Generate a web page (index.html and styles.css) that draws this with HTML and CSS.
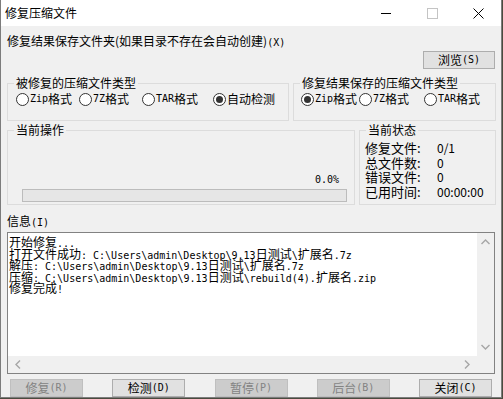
FILE: index.html
```html
<!DOCTYPE html>
<html>
<head>
<meta charset="UTF-8">
<title>修复压缩文件</title>
<link rel="stylesheet" href="styles.css">
</head>
<body>

<div class="window">
  <div class="titlebar">
    <span class="title">修复压缩文件</span>
    <div class="controls">
      <span class="ctl"><svg width="10" height="10" viewBox="0 0 10 10"><path d="M0 5.5h10" stroke="#000" stroke-width="1"/></svg></span>
      <span class="ctl"><svg width="11" height="11" viewBox="0 0 11 11"><rect x="0.5" y="0.5" width="10" height="10" fill="none" stroke="#c4c4c4"/></svg></span>
      <span class="ctl"><svg width="11" height="11" viewBox="0 0 11 11"><path d="M0.5 0.5l10 10M10.5 0.5l-10 10" stroke="#000" stroke-width="1"/></svg></span>
    </div>
  </div>

  <div class="client">
    <div class="folder-label">修复结果保存文件夹(如果目录不存在会自动创建)<span class="a">(X)</span></div>
    <div class="browse-row"><button class="btn browse">浏览<span class="a">(S)</span></button></div>

    <div class="row types">
      <fieldset class="group src">
        <legend>被修复的压缩文件类型</legend>
        <div class="radios">
          <label class="radio"><input type="radio" name="src"><span class="a">Zip</span>格式</label>
          <label class="radio"><input type="radio" name="src"><span class="a">7Z</span>格式</label>
          <label class="radio"><input type="radio" name="src"><span class="a">TAR</span>格式</label>
          <label class="radio"><input type="radio" name="src" checked>自动检测</label>
        </div>
      </fieldset>
      <fieldset class="group dst">
        <legend>修复结果保存的压缩文件类型</legend>
        <div class="radios">
          <label class="radio"><input type="radio" name="dst" checked><span class="a">Zip</span>格式</label>
          <label class="radio"><input type="radio" name="dst"><span class="a">7Z</span>格式</label>
          <label class="radio"><input type="radio" name="dst"><span class="a">TAR</span>格式</label>
        </div>
      </fieldset>
    </div>

    <div class="row work">
      <fieldset class="group op">
        <legend>当前操作</legend>
        <div class="percent"><span class="a">0.0%</span></div>
        <div class="bar"></div>
      </fieldset>
      <fieldset class="group status">
        <legend>当前状态</legend>
        <div class="stats">
          <span class="key">修复文件:</span><span class="val">0/1</span>
          <span class="key">总文件数:</span><span class="val">0</span>
          <span class="key">错误文件:</span><span class="val">0</span>
          <span class="key">已用时间:</span><span class="val">00:00:00</span>
        </div>
      </fieldset>
    </div>

    <div class="info-label">信息<span class="a">(I)</span></div>
    <div class="log">
      <div class="log-text">
        <div class="line">开始修复<span class="a">...</span></div>
        <div class="line">打开文件成功<span class="a">: C:\Users\admin\Desktop\9.13</span>日测试<span class="a">\</span>扩展名<span class="a">.7z</span></div>
        <div class="line">解压<span class="a">: C:\Users\admin\Desktop\9.13</span>日测试<span class="a">\</span>扩展名<span class="a">.7z</span></div>
        <div class="line">压缩<span class="a">: C:\Users\admin\Desktop\9.13</span>日测试<span class="a">\rebuild(4).</span>扩展名<span class="a">.zip</span></div>
        <div class="line">修复完成<span class="a">!</span></div>
      </div>
      <div class="vscroll">
        <svg width="9" height="6" viewBox="0 0 9 6"><path d="M0.5 5L4.5 1L8.5 5" fill="none" stroke="#a6a6a6" stroke-width="1.4"/></svg>
        <svg width="9" height="6" viewBox="0 0 9 6"><path d="M0.5 1L4.5 5L8.5 1" fill="none" stroke="#a6a6a6" stroke-width="1.4"/></svg>
      </div>
      <div class="hscroll">
        <svg width="6" height="9" viewBox="0 0 6 9"><path d="M5 0.5L1 4.5L5 8.5" fill="none" stroke="#a6a6a6" stroke-width="1.4"/></svg>
        <svg width="6" height="9" viewBox="0 0 6 9"><path d="M1 0.5L5 4.5L1 8.5" fill="none" stroke="#a6a6a6" stroke-width="1.4"/></svg>
      </div>
      <div class="corner"></div>
    </div>

    <div class="actions">
      <button class="btn" disabled>修复<span class="a">(R)</span></button>
      <button class="btn">检测<span class="a">(D)</span></button>
      <button class="btn" disabled>暂停<span class="a">(P)</span></button>
      <button class="btn" disabled>后台<span class="a">(B)</span></button>
      <button class="btn">关闭<span class="a">(C)</span></button>
    </div>
  </div>
</div>

</body>
</html>
```

FILE: styles.css
```css
body {
  margin: 0;
  padding: 0;
  background-color: #4a4b3e; /* desktop behind the window */
  font-family: "Noto Sans CJK SC", "Noto Sans", sans-serif;
  font-size: 12px;
  color: #000;
}
/* half-width ascii runs, 6px per char like the old bitmap font */
.a {
  font-family: "DejaVu Sans Mono", "Liberation Mono", monospace;
  font-size: 10px;
}
.window {
  box-sizing: border-box;
  width: 502px;
  height: 398px;
  border: 1px solid #7c7c7c;
  border-top: none;
  background-color: #f0f0f0;
  display: flex;
  flex-direction: column;
}
.titlebar {
  height: 26px;
  background-color: #fff;
  display: flex;
  align-items: center;
  justify-content: space-between;
}
.title {
  padding-left: 4px;
  line-height: 26px;
}
.controls {
  display: flex;
  height: 26px;
}
.ctl {
  width: 46px;
  display: flex;
  align-items: center;
  justify-content: center;
}
.client {
  padding: 8px 5px 0 6px;
  display: flex;
  flex-direction: column;
}
.folder-label {
  line-height: 14px;
}
.browse-row {
  margin-top: 1px;
  display: flex;
  justify-content: flex-end;
  padding-right: 1px;
}
.btn {
  box-sizing: border-box;
  width: 73px;
  height: 18px;
  padding: 0;
  margin: 0;
  border: 1px solid #adadad;
  background-color: #e1e1e1;
  font-family: inherit;
  font-size: 12px;
  line-height: 14px;
  color: #000;
  display: flex;
  align-items: center;
  justify-content: center;
}
.btn:disabled {
  background-color: #cccccc;
  border-color: #bfbfbf;
  color: #838383;
}
.btn.browse {
  width: 72px;
}
/* group boxes */
.row {
  display: flex;
  gap: 4px;
}
.types {
  margin-top: 7px;
}
.work {
  margin-top: 2px;
}
.group {
  margin: 0;
  padding: 0;
  min-inline-size: 0;
  border: 1px solid #dcdcdc;
}
.group > legend {
  margin-left: 6px;
  padding: 0 2px;
  line-height: 14px;
}
.src {
  width: 282px;
  box-sizing: border-box;
  padding: 2px 0 14px 0;
}
.dst {
  flex: 1;
  padding: 2px 0 14px 0;
}
.radios {
  display: grid;
  height: 14px;
  align-items: center;
}
.src .radios {
  margin-left: 8px;
  grid-template-columns: 63px 63px 71px auto;
}
.dst .radios {
  margin-left: 7px;
  grid-template-columns: 58px 65px auto;
}
.radio {
  display: flex;
  align-items: center;
  white-space: nowrap;
  line-height: 14px;
}
.radio input {
  -webkit-appearance: none;
  appearance: none;
  box-sizing: border-box;
  width: 13px;
  height: 13px;
  margin: 0 1px 0 0;
  border: 1px solid #333;
  border-radius: 50%;
  background-color: #fff;
  display: grid;
  place-content: center;
}
.radio input:checked::before {
  content: "";
  width: 7px;
  height: 7px;
  border-radius: 50%;
  background-color: #333;
}
.op {
  width: 348px;
  box-sizing: border-box;
  padding: 34px 0 2px 0;
}
.percent {
  text-align: right;
  line-height: 14px;
  margin-right: 15px;
}
.bar {
  margin: 2px 7px 0 14px;
  height: 13px;
  border: 1px solid #bcbcbc;
  background-color: #e6e6e6;
  box-sizing: border-box;
}
.status {
  flex: 1;
  padding: 4px 0 0 0;
}
.stats {
  margin-left: 5px;
  display: grid;
  grid-template-columns: 72px auto;
  font-size: 13px;
  line-height: 14.7px;
}
.val {
  font-size: 12px;
}
.info-label {
  margin-top: 9px;
  line-height: 14px;
}
/* message box with its scroll bars */
.log {
  margin-top: 2px;
  margin-right: 1px;
  height: 142px;
  box-sizing: border-box;
  border: 1px solid #828282;
  background-color: #fff;
  display: grid;
  grid-template-columns: 1fr 17px;
  grid-template-rows: 1fr 17px;
  min-width: 0;
}
.log-text {
  padding: 3px 0 0 1px;
  white-space: nowrap;
  overflow: hidden;
}
.log-text .line {
  height: 11.5px;
  line-height: 11.5px;
}
.vscroll {
  background-color: #f0f0f0;
  display: flex;
  flex-direction: column;
  justify-content: space-between;
  align-items: center;
  padding: 6px 0 6px;
}
.hscroll {
  background-color: #f0f0f0;
  display: flex;
  justify-content: space-between;
  align-items: center;
  padding: 0 7px 0 7px;
}
.corner {
  background-color: #f0f0f0;
}
.actions {
  margin-top: 5px;
  padding: 0 4px 0 3px;
  display: flex;
  justify-content: space-between;
}
```
